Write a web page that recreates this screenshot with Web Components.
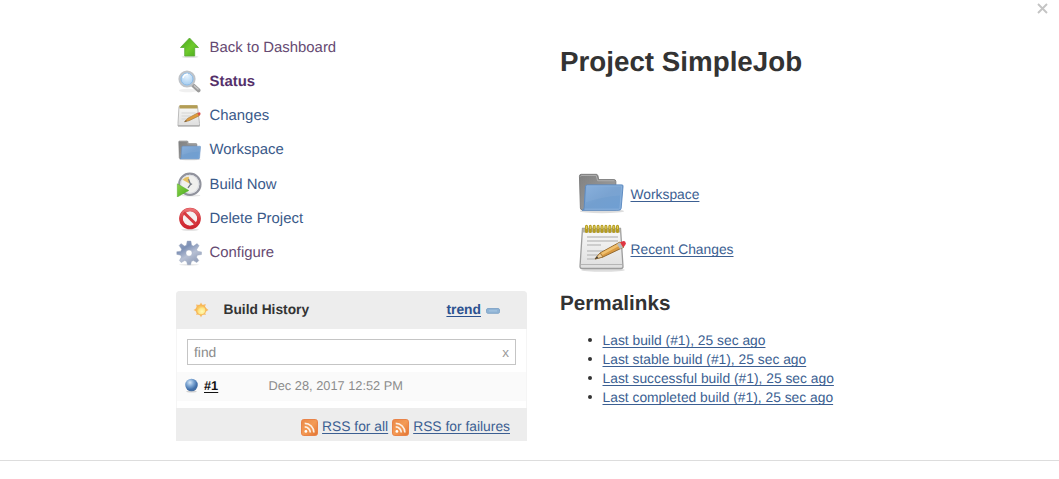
<!DOCTYPE html>
<html lang="en">
<head>
<meta charset="utf-8">
<title>Project SimpleJob</title>
<style>
body{margin:0;background:#fff;font-family:"Liberation Sans",Arial,sans-serif;color:#333;text-rendering:geometricPrecision}
</style>
</head>
<body>
<job-page></job-page>
<script>
const ICONS = {
up:`<svg viewBox="0 0 24 24"><defs><linearGradient id="a" x2="1" y2="1"><stop stop-color="#45a51b"/><stop offset=".55" stop-color="#6fcb2c"/><stop offset="1" stop-color="#48a81c"/></linearGradient></defs><ellipse cx="13" cy="20.8" rx="8.5" ry="1.3" fill="#e3e3e3"/><path d="M12.5 2 21.5 11.5H17.7V20H7.7V11.5H3.5Z" fill="url(#a)" stroke="#5aaa35" stroke-width=".8" stroke-linejoin="round"/></svg>`,
search:`<svg viewBox="0 0 24 24"><defs><radialGradient id="a" cy=".3"><stop stop-color="#e7f4ff"/><stop offset="1" stop-color="#b0d3f2"/></radialGradient></defs><ellipse cx="11" cy="20.5" rx="9" ry="1.8" fill="#f0f0f0"/><path d="m16 15.3 5.5 5" stroke="#9c9c9c" stroke-width="4" stroke-linecap="round"/><path d="m17 15.5 4.5 4" stroke="#ccc" stroke-width="1.2"/><circle cx="10" cy="9" r="7.5" fill="url(#a)" stroke="#bfc3c8" stroke-width="2.2"/><circle cx="10" cy="9" r="6" fill="none" stroke="#86b5e3" stroke-width=".9"/><path d="M6 8.2q1-4 5-4" stroke="#fff" stroke-width="1.3" fill="none"/></svg>`,
notes:`<svg viewBox="0 0 48 48"><defs><linearGradient id="a" y2="1" x2="0"><stop stop-color="#f9f9f9"/><stop offset="1" stop-color="#dedede"/></linearGradient></defs><ellipse cx="25" cy="46" rx="22" ry="1.8" fill="#ddd"/><path d="M4.5 4.5h38l2.5 38q0 2-2 2H4q-2 0-2-2Z" fill="url(#a)" stroke="#9c9c9c" stroke-width="1.3"/><path d="M4.5 4.5h38v4h-38Z" fill="#b5b2a4"/><path d="M3 40.5h41" stroke="#b5b5b5"/><path d="M9 13h31M9 17h31M9 21h14M9 27h25M9 31h12M9 35h8" stroke="#c2c2c2" stroke-width="1.3"/><path d="M8.5 2.2v5.3M12.3 2.2v5.3M16.2 2.2v5.3M20.1 2.2v5.3M24 2.2v5.3M27.9 2.2v5.3M31.8 2.2v5.3M35.7 2.2v5.3M39.5 2.2v5.3" stroke="#b59c20" stroke-width="3" stroke-linecap="round"/><path d="M8.5 2v3M12.3 2v3M16.2 2v3M20.1 2v3M24 2v3M27.9 2v3M31.8 2v3M35.7 2v3M39.5 2v3" stroke="#decb5a" stroke-width="1.1"/><path d="m17 35 5-6 20-11 4 5-21 10Z" fill="#d99a42" stroke="#8b6127" stroke-width=".9"/><path d="m23 29 20-11 1.5 2-20 11Z" fill="#efc06f"/><path d="m17 35 5-6 3 4Z" fill="#edcf9d" stroke="#8b6127" stroke-width=".6"/><path d="m17 35 2-2.8 1.2 1.8Z" fill="#333"/><path d="m39 20 3-1.6 3 5-3 1.5Z" fill="#b9bdc1"/><path d="m42 18.3 2-.9q3.4-1.3 3.8 1.8.2 2.2-2.6 4Z" fill="#df3542"/></svg>`,
notesSmall:`<svg viewBox="0 0 24 24"><defs><linearGradient id="a" y2="1" x2="0"><stop stop-color="#f8f8f6"/><stop offset="1" stop-color="#dedede"/></linearGradient></defs><path d="M2 2.5h18.5l2 17v2.5H1v-2.5Z" fill="url(#a)" stroke="#bcbcbc"/><path d="M1 21.8h21.5" stroke="#adadad" stroke-width="1.3"/><path d="M2.5 2.8h18" stroke="#b39d55" stroke-width="3.4"/><path d="M4.5 9h14M4.5 12h9M4.5 15h5" stroke="#d5d5d3"/><path d="m7.5 17.8 3.4-3.6L20.6 9l1.8 2.7-10.3 5Z" fill="#e09b3b" stroke="#a47d43" stroke-width=".7"/><path d="m7.5 17.8 1.5-1.6.8 1.1Z" fill="#554433"/><path d="m20.4 9.1 2.2-.8q1.4.6.7 2.2l-1.4 1.3Z" fill="#d94e4b"/></svg>`,
folder:`<svg viewBox="0 0 48 42"><defs><linearGradient id="a" x2="1" y2="1"><stop stop-color="#85addb"/><stop offset=".5" stop-color="#739fcf"/><stop offset="1" stop-color="#6f9fd3"/></linearGradient><linearGradient id="b" y2="1"><stop stop-color="#808080"/><stop offset="1" stop-color="#a5a5a5"/></linearGradient></defs><ellipse cx="25" cy="39.5" rx="23" ry="2" fill="#ddd"/><path d="M1.5 3Q1.5 1 3.5 1H19.5Q21 1 21.5 6.5H37.5Q39.5 6.5 39.5 8.5V38H4.5Q2.5 38 2.5 36Z" fill="url(#b)" stroke="#7c7c7c"/><path d="M2.7 3.2Q2.7 2.2 4 2.2H19L20.5 7.7H38" fill="none" stroke="#b0b0b0"/><path d="M7.8 13.5Q8 12 10 12H45.7Q47.3 12 47 13.5L45 36.5Q44.8 38.5 42.5 38.5H4.2Q6.2 38.3 6.4 36Z" fill="url(#a)" stroke="#5c8ac0" stroke-width="1"/><path d="M9 13.2H45.5L43.8 36.4Q43.6 37.4 42 37.4H7" fill="none" stroke="#92b6de" stroke-width=".8"/><path d="M9 14H45L44 23Q26 24 8.2 30Z" fill="#fff" opacity=".05"/></svg>`,
clock:`<svg viewBox="0 0 24 24"><defs><linearGradient id="a" y2="1"><stop stop-color="#8ed44a"/><stop offset="1" stop-color="#45ab1c"/></linearGradient></defs><ellipse cx="14" cy="22.5" rx="9" ry="1" fill="#e7e7e7"/><circle cx="12.8" cy="11.7" r="10.2" fill="#f0f0ee" stroke="#91939d" stroke-width="2.1"/><circle cx="12.8" cy="11.7" r="8.6" fill="none" stroke="#dcdee3"/><path d="M12.8 11.2 5.8 7.4Q8.6 4.3 11.8 4.6Z" fill="#e6c163"/><path d="m11.5 7 2 4.8-2.5 3.4M13 11.7h2" fill="none" stroke="#737881" stroke-width="1.2"/><path d="M.8 11.3 11.8 17.8.8 24Z" fill="url(#a)" stroke="#58ab32" stroke-width=".5"/></svg>`,
stop:`<svg viewBox="0 0 24 24"><defs><linearGradient id="a" x2="0" y2="1"><stop stop-color="#ea7073"/><stop offset=".5" stop-color="#d93a41"/><stop offset="1" stop-color="#cd2630"/></linearGradient></defs><ellipse cx="13" cy="22.8" rx="9" ry=".9" fill="#ddd"/><circle cx="13" cy="11.5" r="9" fill="#f6f0f0" stroke="#cf3a41" stroke-width="3.6"/><circle cx="13" cy="11.5" r="9" fill="none" stroke="url(#a)" stroke-width="3.1"/><path d="m6.8 5.5 12.4 12" stroke="#d6393f" stroke-width="3.1"/></svg>`,
gear:`<svg viewBox="0 0 26 26"><defs><linearGradient id="a" x2=".6" y2="1"><stop stop-color="#a1acc5"/><stop offset=".35" stop-color="#7d90b5"/><stop offset=".65" stop-color="#b7c0d4"/><stop offset="1" stop-color="#929fb9"/></linearGradient></defs><ellipse cx="13" cy="24.8" rx="10" ry=".8" fill="#e6e6e6"/><path fill-rule="evenodd" fill="url(#a)" stroke="#98a3ba" stroke-width=".4" d="m11.2 1 3.7 0 .8 4.3 1.8.8 3.6-2.6 2 2.2-2.4 3.7.8 1.9 4 .6v2.6l-4.2.8-.8 1.9 2.3 3.4-2 2-3.5-2-1.9.8-.8 3.4h-3.1l-.9-3.4-1.9-.8-3.5 2-1.8-2.2 2-3.3-.8-1.9-3.8-.8v-2.7l4-.5.8-1.9L3.1 5.6 5 3.6l3.5 2.5 1.8-.8ZM13 10a3.1 3.1 0 1 0 0 6.2 3.1 3.1 0 1 0 0-6.2Z"/></svg>`,
sun:`<svg viewBox="0 0 16 16"><defs><radialGradient id="a" cx=".6" cy=".65"><stop stop-color="#fffbb8"/><stop offset=".7" stop-color="#fde585"/><stop offset="1" stop-color="#f9c560"/></radialGradient></defs><path d="m8 .6 1.5 2.5 3.2-1.2-.7 3.4L15.5 8 12 10l.8 2.9-3.3-.6L8 15.4l-1.6-3.1-3.2.6.7-3.1L.5 8l3.3-2-.7-3.6 3.4.7Z" fill="#f8bc68"/><circle cx="8" cy="8" r="4.9" fill="url(#a)" stroke="#f5b04e" stroke-width=".8"/></svg>`,
ball:`<svg viewBox="0 0 16 16"><defs><radialGradient id="a" cx=".38" cy=".3" r=".7"><stop stop-color="#d5e6f7"/><stop offset=".4" stop-color="#80a8d4"/><stop offset=".8" stop-color="#416fa9"/><stop offset="1" stop-color="#466ea0"/></radialGradient></defs><ellipse cx="8" cy="14.4" rx="5.5" ry="1.1" fill="#d2d2d2"/><circle cx="8" cy="7.5" r="6.7" fill="url(#a)"/></svg>`,
rss:`<svg viewBox="0 0 17 17"><defs><linearGradient id="a" x2="1" y2="1"><stop stop-color="#e98847"/><stop offset=".5" stop-color="#f49b55"/><stop offset="1" stop-color="#e27330"/></linearGradient></defs><rect x=".5" y=".5" width="16" height="16" rx="2.3" fill="url(#a)" stroke="#e98348"/><circle cx="4.9" cy="12.4" r="1.4" fill="#fff"/><path d="M3.7 7.9a5.6 5.6 0 0 1 5.6 5.6M3.7 4.3a9.2 9.2 0 0 1 9.2 9.2" fill="none" stroke="#fdf0e4" stroke-width="1.7"/></svg>`,
minus:`<svg viewBox="0 0 14 6"><rect x=".5" y=".5" width="13" height="4.8" rx="1.5" fill="#8fb3d5" stroke="#86a8ca"/><path d="M3 2.9h8" stroke="#a9c7e2"/></svg>`,
close:`<svg viewBox="0 0 11 11"><path d="m1 1 9 9M10 1 1 10" stroke="#c4c4c4" stroke-width="1.9"/></svg>`
};
function define(name, html){
  customElements.define(name, class extends HTMLElement{
    constructor(){
      super();
      const t=document.createElement('template');
      t.innerHTML=html;
      this.attachShadow({mode:'open'}).append(t.content.cloneNode(true));
    }
  });
}
customElements.define('ui-icon', class extends HTMLElement{
  connectedCallback(){
    if(this.shadowRoot) return;
    this.attachShadow({mode:'open'}).innerHTML=`<style>:host{display:block;flex:none}svg{display:block;width:100%;height:100%}</style>${ICONS[this.getAttribute('name')]}`;
  }
});
define('text-link',`<style>:host{display:inline-block;color:#3c5f92;white-space:nowrap}a{color:inherit;text-decoration:underline;text-decoration-thickness:1px;text-underline-offset:1.5px;text-decoration-skip-ink:none}</style><a><slot></slot></a>`);
define('task-link',`<style>:host{display:flex;align-items:center;height:34.15px;color:#3a5a8a;font-size:14.9px;white-space:nowrap}.i{width:26px;display:flex;justify-content:center;margin-right:7.5px;padding-top:2px}a{padding-top:2px}</style><span class="i"><slot name="icon"></slot></span><a><slot></slot></a>`);
define('side-tasks',`<style>:host{display:block}.v{color:#664a72}.s{color:#55306a;font-weight:bold;font-size:14.9px}ui-icon{width:24px;height:24px}</style>
<task-link class="v"><ui-icon slot="icon" name="up"></ui-icon>Back to Dashboard</task-link>
<task-link class="s"><ui-icon slot="icon" name="search"></ui-icon>Status</task-link>
<task-link><ui-icon slot="icon" name="notesSmall"></ui-icon>Changes</task-link>
<task-link><ui-icon slot="icon" name="folder" style="width:23px;height:21px"></ui-icon>Workspace</task-link>
<task-link><ui-icon slot="icon" name="clock" style="width:26px;height:25px"></ui-icon>Build Now</task-link>
<task-link><ui-icon slot="icon" name="stop"></ui-icon>Delete Project</task-link>
<task-link class="v"><ui-icon slot="icon" name="gear" style="width:26px;height:26px"></ui-icon>Configure</task-link>`);
define('build-history',`<style>
:host{display:block;box-sizing:border-box;width:351px;height:150px;font-size:13.83px;border-radius:4px 4px 0 0;overflow:hidden;box-shadow:inset 0 0 0 1px #f5f5f5}
header{height:38px;background:#ededed;display:flex;align-items:center;padding:0 27px 0 17px;box-sizing:border-box}
header b{margin-left:14.5px;flex:1;font-size:13.75px;margin-top:-1px}header text-link{font-weight:bold;color:#2c5290;margin-top:-1px}header .m{width:14px;height:6px;margin-left:5px;margin-top:2px}
.sun{width:16px;height:16px}
.find{box-sizing:border-box;width:329px;height:26px;margin:10px 0 7px 11px;border:1px solid #c5c5c5;background:#fff;display:flex;align-items:center;justify-content:space-between;padding:1px 6px 0 6px;color:#8c8c8c}
.find span:last-child{color:#999;font-size:13.5px}
.row{height:29px;margin:0 1px;background:#fafafa;display:flex;align-items:center;font-size:12.8px;color:#8c8c8c;padding:0 0 2px 7px;box-sizing:border-box}
.row ui-icon{width:15px;height:15px;margin-top:1px}.row text-link{color:#111;font-weight:bold;margin-left:5px;width:64.5px}
footer{height:33px;margin-top:7px;background:#ededed;display:flex;align-items:center;justify-content:flex-end;padding:4px 17px 0 0;box-sizing:border-box}
footer ui-icon{width:17px;height:17px;margin:3px 4px 0 4px}
</style><header><ui-icon class="sun" name="sun"></ui-icon><b>Build History</b><text-link>trend</text-link><ui-icon class="m" name="minus"></ui-icon></header>
<div class="find"><span>find</span><span>x</span></div>
<div class="row"><ui-icon name="ball"></ui-icon><text-link>#1</text-link><span>Dec 28, 2017 12:52 PM</span></div>
<footer><ui-icon name="rss"></ui-icon><text-link>RSS for all</text-link><ui-icon name="rss"></ui-icon><text-link>RSS for failures</text-link></footer>`);
define('project-main',`<style>
:host{display:block;font-size:13.83px}
h1{font-size:27.75px;line-height:34px;margin:0;white-space:nowrap}
.q{display:flex;align-items:center;height:54.5px;padding-left:18px}.q text-link{padding-top:2px}.q ui-icon{width:48px;height:48px;margin-right:4.5px}.q ui-icon.f{width:46px;height:41px;margin-right:6.5px}
h2{font-size:20.7px;line-height:26px;margin:16px 0 0}
ul{list-style:none;margin:14px 0 0;padding:0}li{display:flex;align-items:center;height:18.8px;padding-left:28px}li:before{content:"";width:4px;height:4px;border-radius:50%;background:#333;margin-right:10.5px}
</style><h1>Project SimpleJob</h1>
<div class="q" style="margin-top:87px"><ui-icon class="f" name="folder"></ui-icon><text-link>Workspace</text-link></div>
<div class="q"><ui-icon name="notes"></ui-icon><text-link>Recent Changes</text-link></div>
<h2>Permalinks</h2>
<ul><li><text-link>Last build (#1), 25 sec ago</text-link></li><li><text-link>Last stable build (#1), 25 sec ago</text-link></li><li><text-link>Last successful build (#1), 25 sec ago</text-link></li><li><text-link>Last completed build (#1), 25 sec ago</text-link></li></ul>`);
define('job-page',`<style>
:host{display:block;position:relative;height:479px;overflow:hidden}
main{box-sizing:border-box;height:461px;border-bottom:1px solid #ddd;display:grid;grid-template-columns:351px 1fr;column-gap:33px;padding-left:176px;align-items:start}
.left{padding-top:30px}build-history{margin-top:22px}project-main{padding-top:45px}
.close{position:absolute;left:1037px;top:3px;width:11px;height:11px}
</style><main><div class="left"><side-tasks></side-tasks><build-history></build-history></div><project-main></project-main></main><ui-icon class="close" name="close"></ui-icon>`);
</script>
</body>
</html>
